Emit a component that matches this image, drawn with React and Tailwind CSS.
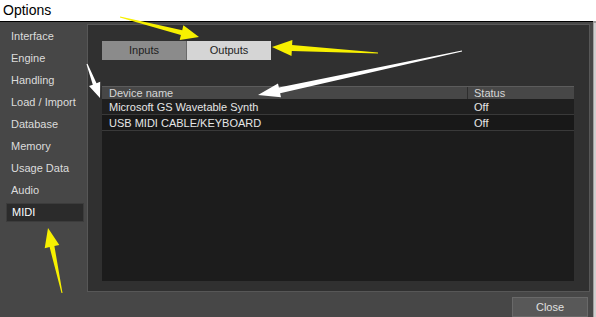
import React from "react";

const items = [
  "Interface",
  "Engine",
  "Handling",
  "Load / Import",
  "Database",
  "Memory",
  "Usage Data",
  "Audio",
  "MIDI",
];

const devices = [
  { name: "Microsoft GS Wavetable Synth", status: "Off" },
  { name: "USB MIDI CABLE/KEYBOARD", status: "Off" },
];

// tapered annotation arrow: thin tail, wide head
function arrowPoints(tail, tip, headLen, headW, shaftW) {
  const dx = tip[0] - tail[0];
  const dy = tip[1] - tail[1];
  const len = Math.hypot(dx, dy);
  const ux = dx / len;
  const uy = dy / len;
  const nx = -uy;
  const ny = ux;
  const bx = tip[0] - ux * headLen;
  const by = tip[1] - uy * headLen;
  const pts = [
    [tail[0] + nx * 0.5, tail[1] + ny * 0.5],
    [bx + (nx * shaftW) / 2, by + (ny * shaftW) / 2],
    [bx + (nx * headW) / 2, by + (ny * headW) / 2],
    tip,
    [bx - (nx * headW) / 2, by - (ny * headW) / 2],
    [bx - (nx * shaftW) / 2, by - (ny * shaftW) / 2],
    [tail[0] - nx * 0.5, tail[1] - ny * 0.5],
  ];
  return pts.map((p) => `${p[0].toFixed(1)},${p[1].toFixed(1)}`).join(" ");
}

const arrows = [
  { tail: [120, 17], tip: [199, 37], h: 18, w: 15, s: 5, c: "#f7f000" },
  { tail: [378, 53], tip: [272, 47], h: 20, w: 16, s: 6, c: "#f7f000" },
  { tail: [462, 51], tip: [258, 95], h: 22, w: 14, s: 6, c: "#ffffff" },
  { tail: [87, 64], tip: [100, 98], h: 15, w: 12, s: 4, c: "#ffffff" },
  { tail: [62, 293], tip: [48, 228], h: 19, w: 15, s: 5, c: "#f7f000" },
];

export default function App() {
  return (
    <div
      className="relative w-[596px] h-[317px] overflow-hidden bg-white"
      style={{ fontFamily: '"Liberation Sans", "DejaVu Sans", sans-serif' }}
    >
      <div className="h-[21px] pl-[3px] text-[14px] leading-[21px] text-black">
        Options
      </div>
      <div className="flex h-[296px]">
        <div className="w-[593px] flex flex-col">
          <div className="h-[2px] bg-black" />
          <div className="flex-1 flex flex-col bg-[#474747]">
            <div className="flex h-[270px]">
              <div className="w-[87px] pt-[5px] pl-[6px] flex flex-col gap-[3px]">
                {items.map((item) => (
                  <div
                    key={item}
                    className={`w-[78px] h-[19px] pl-[5px] flex items-center text-[11px] text-[#dcdcdc] ${
                      item === "MIDI"
                        ? "bg-[#2b2b2b] border border-[#3c3c3c] pl-[4px] text-white"
                        : ""
                    }`}
                  >
                    {item}
                  </div>
                ))}
              </div>

              <div className="w-[503px] h-[268px] mt-[2px] border border-[#575757] bg-[#303030] pt-[16px] pl-[14px] pr-[15px] pb-[10px] flex flex-col">
                <div className="flex">
                  <div className="w-[84px] h-[19px] bg-[#8b8b8b] flex items-center justify-center text-[11px] text-[#1e1e1e]">
                    Inputs
                  </div>
                  <div className="w-[85px] h-[19px] bg-[#d5d5d5] border-l border-[#6a6a6a] flex items-center justify-center text-[11px] text-[#1e1e1e]">
                    Outputs
                  </div>
                </div>

                <div className="mt-[26px] flex-1 flex flex-col bg-[#1c1c1c]">
                  <div className="h-[13px] flex bg-[#474747] border-t border-[#5c5c5c] text-[11px] leading-[13px] text-[#d6d6d6]">
                    <div className="w-[365px] pl-[7px]">Device name</div>
                    <div className="flex-1 border-l border-[#2e2e2e] pl-[6px]">
                      Status
                    </div>
                  </div>
                  {devices.map((d, i) => (
                    <div
                      key={d.name}
                      className={`h-[16px] flex items-center pt-[1px] border-b border-[#393939] text-[11px] text-[#e6e6e6] ${
                        i === 0 ? "bg-[#1f1f1f]" : "bg-[#181818]"
                      }`}
                    >
                      <div className="w-[365px] pl-[7px]">{d.name}</div>
                      <div className="flex-1 pl-[7px]">{d.status}</div>
                    </div>
                  ))}
                </div>
              </div>
            </div>

            <div className="flex-1 flex justify-end pt-[5px] pr-[5px]">
              <div className="w-[76px] h-[20px] bg-[#585858] border border-[#696969] flex items-center justify-center text-[11px] text-[#e0e0e0]">
                Close
              </div>
            </div>
          </div>
        </div>
        <div className="w-[3px] flex flex-col">
          <div className="h-[2px] bg-[#9a9a9a]" />
          <div className="flex-1 bg-[#cfcfcf] border-l border-[#a0a0a0]" />
        </div>
      </div>

      <svg
        className="absolute left-0 top-0 pointer-events-none"
        width="596"
        height="317"
        viewBox="0 0 596 317"
      >
        {arrows.map((a, i) => (
          <polygon
            key={i}
            points={arrowPoints(a.tail, a.tip, a.h, a.w, a.s)}
            fill={a.c}
          />
        ))}
      </svg>
    </div>
  );
}
